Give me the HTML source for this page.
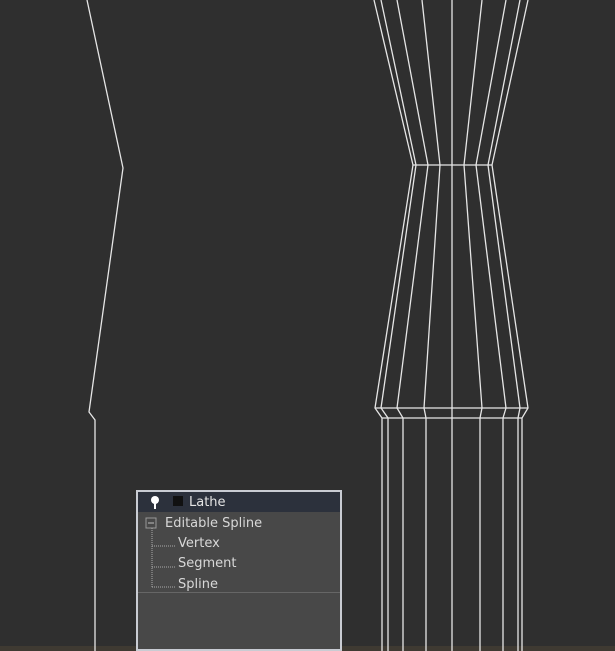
<!DOCTYPE html>
<html><head><style>
html,body{margin:0;padding:0;width:615px;height:651px;overflow:hidden;background:#2f2f2f;}
svg{position:absolute;left:0;top:0}
.panel{position:absolute;left:136px;top:490px;width:202px;height:157px;border:2px solid #c9ccd3;background:#484848;font-family:"DejaVu Sans","Liberation Sans",sans-serif;font-size:13px;color:#d8d8d8;}
.hdr{height:20px;background:#2c313c;position:relative;}
.hdr span{position:absolute;left:51px;top:3px;color:#e4e4e4}
.row{position:absolute;font-size:13px}
</style></head><body>
<svg width="615" height="651">
<rect x="0" y="646" width="615" height="5" fill="#3f3a32"/>
<g fill="none" stroke="#e6e6e6" stroke-width="1.3">
<polyline points="87,0 123,168 89,412 95,420 95,651"/>
<polyline points="374,0 413,165 375,408 382,418 382,651"/>
<polyline points="381,0 416,165 381,408 388,418 388,651"/>
<polyline points="397,0 428,165 397,408 403,418 403,651"/>
<polyline points="422,0 440,165 424,408 426,418 426,651"/>
<polyline points="452,0 452,651"/>
<polyline points="482,0 464,165 482,408 480,418 480,651"/>
<polyline points="506,0 476,165 506,408 503,418 503,651"/>
<polyline points="520,0 488,165 520,408 518,418 518,651"/>
<polyline points="528,0 492,165 528,408 522,418 522,651"/>
<line x1="413" y1="165" x2="492" y2="165"/>
<line x1="375" y1="408" x2="528" y2="408"/>
<line x1="382" y1="418" x2="522" y2="418"/>
</g>
</svg>
<div class="panel">
<div class="hdr">
<svg width="40" height="20" style="position:absolute;left:8px;top:0"><circle cx="9" cy="8" r="4" fill="#fff"/><line x1="9" y1="10" x2="9" y2="17" stroke="#fff" stroke-width="2"/><rect x="27" y="4" width="10" height="10" fill="#111"/></svg>
<span>Lathe</span></div>
<svg width="202" height="80" style="position:absolute;left:0;top:20px">
<rect x="8" y="6" width="10" height="10" fill="none" stroke="#999"/><line x1="10" y1="11" x2="16" y2="11" stroke="#bbb"/>
<path d="M14 16 V75 M14 34 H38 M14 55 H38 M14 75 H38" stroke="#aaa" stroke-dasharray="1,1" fill="none"/>
</svg>
<div class="row" style="left:27px;top:24px">Editable Spline</div>
<div class="row" style="left:40px;top:44px">Vertex</div>
<div class="row" style="left:40px;top:64px">Segment</div>
<div class="row" style="left:40px;top:85px">Spline</div>
<div style="position:absolute;left:0;top:100px;width:202px;height:1px;background:#666"></div>
</div>
</body></html>
